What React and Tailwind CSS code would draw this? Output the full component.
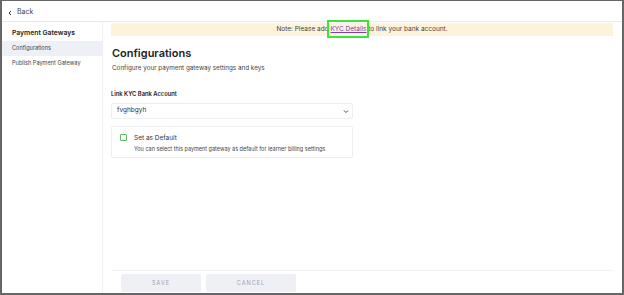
import React from "react";

const App = () => {
  return (
    <div className="w-[624px] h-[295px] bg-white border-[#666666] border-x-2 border-b-2 border-t flex flex-col font-['Inter',sans-serif] text-[#2b2b33] overflow-hidden">
      {/* Top bar */}
      <div className="h-[21px] shrink-0 border-b border-[#e6e8ee] flex items-center pl-[5px] pt-[2px] gap-[4px] text-[7px] text-[#444]">
        <svg width="6" height="6" viewBox="0 0 6 6" className="mt-[1px]">
          <path d="M4 1 L2 3 L4 5" stroke="#333" strokeWidth="1" fill="none" />
        </svg>
        <span>Back</span>
      </div>

      <div className="flex flex-1 min-h-0">
        {/* Sidebar */}
        <div className="w-[101px] shrink-0 border-r border-[#f0f1f4] pt-[4px]">
          <div className="pl-[10px] h-[14px] flex items-center text-[6.8px] font-semibold text-[#222]">
            Payment Gateways
          </div>
          <div className="mt-[1px] h-[15px] bg-[#eef0f7] pl-[10px] flex items-center text-[5.6px] text-[#444]">
            Configurations
          </div>
          <div className="h-[15px] pl-[10px] flex items-center text-[5.6px] text-[#444]">
            Publish Payment Gateway
          </div>
        </div>

        {/* Main */}
        <div className="flex-1 flex flex-col min-w-0">
          <div className="flex-1 pl-[8px] pr-[9px]">
            <div className="relative h-[13px] mt-[1px] bg-[#fdf3da] flex items-center justify-center text-[6.5px] text-[#444]">
              <span>
                Note: Please add{" "}
                <span className="relative text-[#7b3fb0] underline">
                  KYC Details
                  <span className="absolute -left-[3px] -right-[3px] -top-[5px] -bottom-[5px] border-2 border-[#3be33b]"></span>
                </span>{" "}
                to link your bank account.
              </span>
            </div>

            <div className="mt-[10px] pl-[1px] text-[11px] font-semibold leading-[14px] text-[#222]">
              Configurations
            </div>
            <div className="mt-[4px] pl-[1px] text-[6.3px] text-[#444]">
              Configure your payment gateway settings and keys
            </div>

            <div className="mt-[17px] text-[5.8px] font-semibold text-[#222]">
              Link KYC Bank Account
            </div>
            <div className="mt-[4px] w-[242px] h-[16px] border border-[#eceef2] rounded-[2px] flex items-center justify-between pl-[5px] pr-[3px] text-[6.5px] text-[#333]">
              <span>fvghbgyh</span>
              <svg width="6" height="5" viewBox="0 0 6 5">
                <path d="M1 1.5 L3 3.5 L5 1.5" stroke="#444" strokeWidth="1" fill="none" />
              </svg>
            </div>

            <div className="mt-[7px] w-[242px] h-[32px] border border-[#eceef2] rounded-[2px] flex pl-[8px] pt-[7px] gap-[7px]">
              <div className="w-[7px] h-[7px] border border-[#5cbf5c] rounded-[1px] shrink-0"></div>
              <div className="flex flex-col">
                <span className="text-[6.5px] leading-[8px] text-[#333]">Set as Default</span>
                <span className="mt-[4px] text-[5.5px] leading-[7px] text-[#444]">
                  You can select this payment gateway as default for learner billing settings
                </span>
              </div>
            </div>
          </div>

          {/* Footer */}
          <div className="ml-[8px] mr-[9px] border-t border-[#f0f1f4] h-[23px] flex items-start pt-[3px] pl-[10px] gap-[5px]">
            <button className="w-[80px] h-[18px] bg-[#eef0f6] rounded-[2px] text-[5.5px] tracking-[1px] text-[#9aa1b2]">
              SAVE
            </button>
            <button className="w-[90px] h-[18px] bg-[#eef0f6] rounded-[2px] text-[5.5px] tracking-[1px] text-[#9aa1b2]">
              CANCEL
            </button>
          </div>
        </div>
      </div>
    </div>
  );
};

export default App;
